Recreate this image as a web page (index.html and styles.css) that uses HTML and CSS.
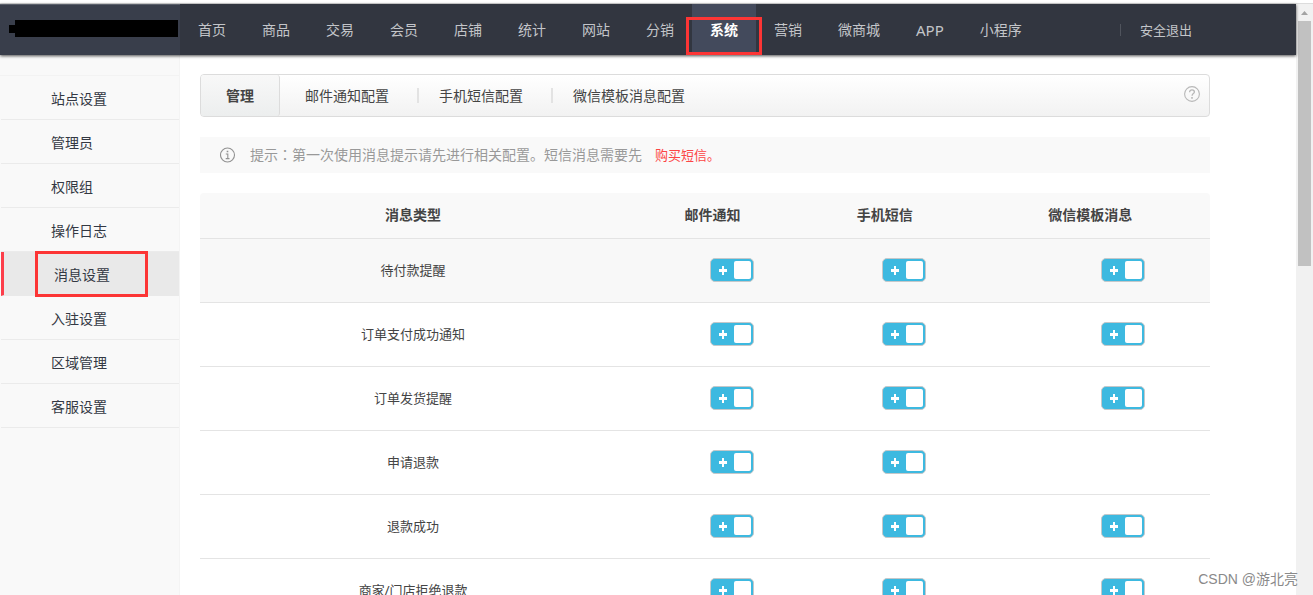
FILE: index.html
```html
<!DOCTYPE html>
<html lang="zh-CN">
<head>
<meta charset="utf-8">
<title>消息设置</title>
<link rel="stylesheet" href="styles.css">
</head>
<body>
<div class="window">
  <div class="page">
    <header class="header">
      <div class="brand"><span class="brand-tip"></span><span class="brand-name"></span></div>
      <div class="header-inner">
        <nav class="nav">
          <a class="nav-item" href="#">首页</a>
          <a class="nav-item" href="#">商品</a>
          <a class="nav-item" href="#">交易</a>
          <a class="nav-item" href="#">会员</a>
          <a class="nav-item" href="#">店铺</a>
          <a class="nav-item" href="#">统计</a>
          <a class="nav-item" href="#">网站</a>
          <a class="nav-item" href="#">分销</a>
          <a class="nav-item nav-active" href="#">系统</a>
          <a class="nav-item" href="#">营销</a>
          <a class="nav-item" href="#">微商城</a>
          <a class="nav-item nav-app" href="#">APP</a>
          <a class="nav-item" href="#">小程序</a>
        </nav>
        <a class="logout" href="#">安全退出</a>
      </div>
    </header>
    <div class="body">
      <aside class="sidebar">
        <ul class="menu">
          <li><a class="menu-item" href="#">站点设置</a></li>
          <li><a class="menu-item" href="#">管理员</a></li>
          <li><a class="menu-item" href="#">权限组</a></li>
          <li><a class="menu-item" href="#">操作日志</a></li>
          <li><a class="menu-item menu-active" href="#"><span class="menu-mark">消息设置</span></a></li>
          <li><a class="menu-item" href="#">入驻设置</a></li>
          <li><a class="menu-item" href="#">区域管理</a></li>
          <li><a class="menu-item" href="#">客服设置</a></li>
        </ul>
      </aside>
      <main class="main">
        <nav class="tabs">
          <a class="tab tab-active" href="#">管理</a>
          <a class="tab tab-first" href="#">邮件通知配置</a>
          <a class="tab" href="#">手机短信配置</a>
          <a class="tab" href="#">微信模板消息配置</a>
          <button class="help" type="button" aria-label="帮助">
            <svg width="16" height="16" viewBox="0 0 16 16" fill="none" stroke="#b8b8b8"><circle cx="8" cy="8" r="7.4" stroke-width="1.1"/><path d="M5.6 6.2C5.6 4.7 6.6 3.8 8 3.8s2.4.9 2.4 2.2c0 1.6-2.3 1.7-2.3 3.8" stroke-width="1.3"/><path d="M7.2 11.9h1.6" stroke-width="1.6"/></svg>
          </button>
        </nav>
        <p class="tip">
          <svg class="tip-icon" width="16" height="16" viewBox="0 0 16 16" fill="none" stroke="#929292"><circle cx="7.5" cy="8" r="7" stroke-width="1.1"/><path d="M6.7 4.5h1.6" stroke-width="1.5"/><path d="M5.8 7h2v4.6M5.7 11.6h3.8" stroke-width="1.1"/></svg>
          <span>提示<span lang="zh-TW">：</span>第一次使用消息提示请先进行相关配置。短信消息需要先</span>
          <a class="buy" href="#">购买短信。</a>
        </p>
        <table class="table">
          <colgroup><col class="col-type"><col class="col-mail"><col class="col-sms"><col class="col-wx"></colgroup>
          <thead>
            <tr><th>消息类型</th><th>邮件通知</th><th>手机短信</th><th>微信模板消息</th></tr>
          </thead>
          <tbody>
            <tr class="hover"><td>待付款提醒</td><td class="sw"><input class="switch" type="checkbox" checked aria-label="待付款提醒 邮件通知"></td><td class="sw"><input class="switch" type="checkbox" checked aria-label="待付款提醒 手机短信"></td><td class="sw sw-wx"><input class="switch" type="checkbox" checked aria-label="待付款提醒 微信模板消息"></td></tr>
            <tr><td>订单支付成功通知</td><td class="sw"><input class="switch" type="checkbox" checked aria-label="订单支付成功通知 邮件通知"></td><td class="sw"><input class="switch" type="checkbox" checked aria-label="订单支付成功通知 手机短信"></td><td class="sw sw-wx"><input class="switch" type="checkbox" checked aria-label="订单支付成功通知 微信模板消息"></td></tr>
            <tr><td>订单发货提醒</td><td class="sw"><input class="switch" type="checkbox" checked aria-label="订单发货提醒 邮件通知"></td><td class="sw"><input class="switch" type="checkbox" checked aria-label="订单发货提醒 手机短信"></td><td class="sw sw-wx"><input class="switch" type="checkbox" checked aria-label="订单发货提醒 微信模板消息"></td></tr>
            <tr><td>申请退款</td><td class="sw"><input class="switch" type="checkbox" checked aria-label="申请退款 邮件通知"></td><td class="sw"><input class="switch" type="checkbox" checked aria-label="申请退款 手机短信"></td><td></td></tr>
            <tr><td>退款成功</td><td class="sw"><input class="switch" type="checkbox" checked aria-label="退款成功 邮件通知"></td><td class="sw"><input class="switch" type="checkbox" checked aria-label="退款成功 手机短信"></td><td class="sw sw-wx"><input class="switch" type="checkbox" checked aria-label="退款成功 微信模板消息"></td></tr>
            <tr><td>商家/门店拒绝退款</td><td class="sw"><input class="switch" type="checkbox" checked aria-label="商家/门店拒绝退款 邮件通知"></td><td class="sw"><input class="switch" type="checkbox" checked aria-label="商家/门店拒绝退款 手机短信"></td><td class="sw sw-wx"><input class="switch" type="checkbox" checked aria-label="商家/门店拒绝退款 微信模板消息"></td></tr>
          </tbody>
        </table>
      </main>
    </div>
  </div>
  <div class="scrollbar">
    <svg width="17" height="17" viewBox="0 0 17 17"><path d="M5 11l3.5-4 3.5 4z" fill="#a3a3a3"/></svg>
    <div class="thumb"></div>
  </div>
  <div class="watermark">CSDN @游北亮</div>
</div>
</body>
</html>
```
FILE: styles.css
```css
* { box-sizing: border-box; }
body {
  margin: 0;
  overflow: hidden;
  background: #fff;
  color: #444;
  font: 14px/20px "Noto Sans", "Noto Sans CJK SC", sans-serif;
}
a { color: inherit; text-decoration: none; }
.window {
  position: relative;
  display: flex;
  height: 100vh;
  padding-top: 3px;
  overflow: hidden;
}
.page {
  flex: 1;
  min-width: 0;
  display: flex;
  flex-direction: column;
  border-top: 1px solid #dcdcdc;
}
.header {
  position: relative;
  z-index: 1;
  flex: none;
  display: flex;
  height: 51px;
  background: #323640;
  box-shadow: 0 1px 3px rgba(0, 0, 0, .7);
}
.brand {
  flex: none;
  display: flex;
  align-items: center;
  width: 180px;
  padding: 0 2px 3px 9px;
  background: #393e4b;
  border-top: 1px solid #5b606b;
}
.brand-tip { width: 6px; height: 8px; background: #000; }
.brand-name { flex: 1; height: 17px; background: #000; }
.header-inner {
  flex: 1;
  display: flex;
  justify-content: space-between;
  align-items: center;
  max-width: 1012px;
  color: #c3c5c9;
}
.nav { display: flex; height: 100%; }
.nav-item { padding: 0 18px; line-height: 52px; white-space: nowrap; }
.nav-app { font-size: 15px; }
.nav-active {
  position: relative;
  background: #434a5c;
  color: #fff;
  font-weight: 700;
}
.nav-active::after {
  content: "";
  position: absolute;
  inset: 13px -6px 0;
  border: 3px solid #fc3535;
}
.logout {
  font-size: 13px;
  line-height: 12px;
  padding-left: 19px;
  border-left: 1px solid #50545d;
}
.body { flex: 1; display: flex; min-height: 0; }
.sidebar {
  flex: none;
  width: 180px;
  padding-top: 20px;
  background: #f9f9f9;
  border-right: 1px solid #f4f4f4;
  color: #333843;
}
.menu {
  margin: 0;
  padding: 0 0 0 1px;
  list-style: none;
  border-top: 1px solid #f3f3f3;
}
.menu-item {
  display: flex;
  align-items: center;
  height: 44px;
  padding: 2px 0 0 50px;
  border-bottom: 1px solid #ebebeb;
}
.menu-active {
  padding: 0 0 0 31px;
  background: #e9e9e9;
  border-left: 3px solid #fc3e4a;
  border-bottom-color: #e9e9e9;
}
.menu-mark {
  flex: none;
  width: 113px;
  padding: 11px 0 9px 16px;
  border: 3px solid #fc3535;
}
.main { flex: 1; min-width: 0; max-width: 1050px; padding: 19px 20px 0; }
.tabs {
  display: flex;
  align-items: center;
  height: 43px;
  background: linear-gradient(#fff, #f2f2f2);
  border: 1px solid #dcdcdc;
  border-radius: 4px;
}
.tab {
  padding: 0 28px 0 20px;
  line-height: 15px;
  white-space: nowrap;
}
.tab + .tab:not(.tab-first) { border-left: 2px solid #e3e3e3; }
.tab.tab-first { padding-left: 25px; }
.tab-active {
  width: 79px;
  padding: 0;
  text-align: center;
  line-height: 41px;
  font-weight: 700;
  background: linear-gradient(#f8f8f8, #eceeee);
  border-right: 1px solid #dcdcdc;
  border-radius: 3px;
}
.help {
  display: flex;
  margin: 0 9px 4px auto;
  padding: 0;
  border: 0;
  background: none;
}
.tip {
  display: flex;
  align-items: center;
  height: 36px;
  margin: 20px 0;
  padding-left: 20px;
  background: #f9f9f9;
  color: #999;
  white-space: nowrap;
}
.tip-icon { margin-right: 14px; }
.tip [lang="zh-TW"] { font-family: inherit; }
.buy { margin-left: 13px; font-size: 13px; color: #fc4545; }
.table {
  width: 100%;
  table-layout: fixed;
  border-collapse: separate;
  border-spacing: 0;
}
.col-type { width: 42.2%; }
.col-mail { width: 17.1%; }
.col-sms { width: 17%; }
.table th {
  height: 46px;
  padding: 0 0 2px;
  background: #f9f9f9;
  border-bottom: 1px solid #e4e4e4;
}
.table th:first-child { border-top-left-radius: 4px; }
.table th:last-child { border-top-right-radius: 4px; }
.table td {
  height: 64px;
  padding: 0 0 2px;
  border-bottom: 1px solid #e4e4e4;
  text-align: center;
  font-size: 13px;
}
.hover td { background: #f8f8f8; }
.table .sw { padding-left: 38px; }
.table .sw-wx { padding-left: 66px; }
.switch {
  appearance: none;
  display: block;
  width: 44px;
  height: 24px;
  margin: 0 auto;
  border: 1px solid #c4c8ca;
  border-radius: 5px;
  background:
    linear-gradient(#fff, #fff) 8px 10px / 8px 3px no-repeat,
    linear-gradient(#fff, #fff) 11px 7px / 2px 9px no-repeat,
    #3db9e0;
}
.switch::before {
  content: "";
  display: block;
  width: 17px;
  height: 18px;
  margin: 2px 2px 2px auto;
  border-radius: 2px;
  background: #fff;
}
.scrollbar { flex: none; width: 17px; background: #f1f1f1; border-top: 1px solid #dcdcdc; }
.scrollbar svg { display: block; }
.thumb { height: 41.5%; margin: 0 2px; background: #c1c1c1; }
.watermark {
  position: absolute;
  right: 15px;
  bottom: 6px;
  z-index: 2;
  font-family: "Liberation Sans", "Noto Sans CJK SC", sans-serif;
  color: #8a8a8a;
}
```
